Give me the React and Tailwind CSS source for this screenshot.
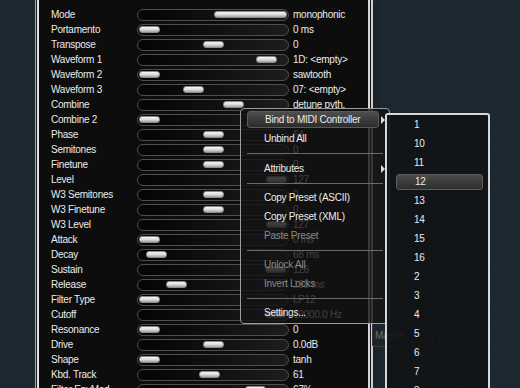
import clsx from 'clsx';

const rows = [
    { label: 'Mode', thumb: 76, wide: true, value: 'monophonic' },
    { label: 'Portamento', thumb: 1, value: '0 ms' },
    { label: 'Transpose', thumb: 65, value: '0' },
    { label: 'Waveform 1', thumb: 118, value: '1D: <empty>' },
    { label: 'Waveform 2', thumb: 1, value: 'sawtooth' },
    { label: 'Waveform 3', thumb: 45, value: '07: <empty>' },
    { label: 'Combine', thumb: 85, value: 'detune pyth.' },
    { label: 'Combine 2', thumb: 1, value: '0' },
    { label: 'Phase', thumb: 65, value: '64' },
    { label: 'Semitones', thumb: 65, value: '0' },
    { label: 'Finetune', thumb: 65, value: '0' },
    { label: 'Level', thumb: 128, value: '127' },
    { label: 'W3 Semitones', thumb: 65, value: '0' },
    { label: 'W3 Finetune', thumb: 65, value: '0' },
    { label: 'W3 Level', thumb: 128, value: '127' },
    { label: 'Attack', thumb: 1, value: '0 ms' },
    { label: 'Decay', thumb: 8, value: '68 ms' },
    { label: 'Sustain', thumb: 127, value: '126' },
    { label: 'Release', thumb: 28, value: '198 ms' },
    { label: 'Filter Type', thumb: 1, value: 'LP12' },
    { label: 'Cutoff', thumb: 127, value: '10000.0 Hz' },
    { label: 'Resonance', thumb: 1, value: '0' },
    { label: 'Drive', thumb: 65, value: '0.0dB' },
    { label: 'Shape', thumb: 1, value: 'tanh' },
    { label: 'Kbd. Track', thumb: 61, value: '61' },
    { label: 'Filter EnvMod', thumb: 107, value: '67%' },
];

const menu = [
    { text: 'Bind to MIDI Controller', active: true, arrow: true },
    { text: 'Unbind All' },
    { sep: 11 },
    { text: 'Attributes', arrow: true },
    { sep: 10 },
    { text: 'Copy Preset (ASCII)' },
    { text: 'Copy Preset (XML)' },
    { text: 'Paste Preset', disabled: true },
    { sep: 10 },
    { text: 'Unlock All', disabled: true },
    { text: 'Invert Locks', disabled: true },
    { sep: 10 },
    { text: 'Settings...' },
];

const controllers = ['1', '10', '11', '12', '13', '14', '15', '16', '2', '3', '4', '5', '6', '7', '8'];

const Slider = ({ thumb, wide }) => (
    <div className="w-[152px] h-[12px] shrink-0 rounded-[6px] border border-[#4e4e4e] bg-gradient-to-r from-[#050505] to-[#1d1d1d] flex items-center">
        <div
            className={clsx(
                'h-[7px] rounded-[3px] border border-[#8a8a8a] bg-gradient-to-b from-[#f6f6f6] via-[#dcdcdc] to-[#a4a4a4]',
                wide ? 'w-[73px]' : 'w-[21px]'
            )}
            style={{ marginLeft: thumb }}
        />
    </div>
);

const Arrow = () => (
    <div className="w-0 h-0 border-y-[4px] border-y-transparent border-l-[4px] border-l-[#dcdcdc]" />
);

export default function App() {
    return (
        <div className="relative w-[520px] h-[388px] overflow-hidden flex bg-[#1d2830] bg-[repeating-linear-gradient(135deg,#1e2a32_0px,#1e2a32_2px,#1b262e_2px,#1b262e_4px)] font-['Liberation_Sans',Arial,sans-serif] text-[10px] tracking-[-0.25px] text-[#ebebeb]">
            <div className="w-[35px] shrink-0" />
            <div className="w-px bg-[#a8a8a8]" />
            <div className="w-px bg-[#1a1a1a]" />
            <div className="w-[2px] bg-[#e2e2e2]" />

            {/* parameter panel */}
            <div className="w-[329px] shrink-0 bg-[#0d0d0d] pt-[7px] flex flex-col">
                {rows.map((row) => (
                    <div key={row.label} className="h-[15px] shrink-0 flex items-center pl-[12px]">
                        <div className="w-[86px] shrink-0 leading-none">{row.label}</div>
                        <Slider thumb={row.thumb} wide={row.wide} />
                        <div className="ml-[4px] whitespace-nowrap leading-none">{row.value}</div>
                    </div>
                ))}
            </div>

            <div className="w-[2px] bg-[#e2e2e2]" />
            <div className="w-px bg-[#1a1a1a]" />
            <div className="w-[2px] bg-[#cfcfcf] shadow-[2px_0_8px_rgba(0,0,0,0.6)]" />

            {/* background widget, behind the menus */}
            <div className="absolute left-[372px] top-[323px] w-[61px] h-[24px] border border-[#3c3c3c] rounded-[2px] flex items-end pb-[3px] pl-[2px] text-[#6c6c6c]">
                Master
            </div>

            {/* context menu */}
            <div className="absolute left-[240px] top-[108px] w-[150px] border border-[#9c9c9c] rounded-[4px] bg-[#131313]/80 pt-px pb-px flex flex-col">
                {menu.map((m, i) =>
                    m.sep ? (
                        <div key={i} className="flex items-center px-[6px]" style={{ height: m.sep }}>
                            <div className="flex-1 h-px bg-[#6a6a6a]" />
                        </div>
                    ) : (
                        <div key={i} className="h-[19px] flex items-center pl-[6px] pr-[4px]">
                            <div
                                className={clsx(
                                    'flex-1 h-[17px] flex items-center pl-[17px] rounded-[3px] whitespace-nowrap',
                                    m.active && 'bg-gradient-to-b from-[#4e4e4e] to-[#2c2c2c] border border-[#5a5a5a]',
                                    m.disabled ? 'text-[#8a8a8a]' : 'text-[#ececec]'
                                )}
                            >
                                {m.text}
                            </div>
                            <div className="w-[4px] ml-[2px]">{m.arrow && <Arrow />}</div>
                        </div>
                    )
                )}
            </div>

            {/* controller submenu */}
            <div className="absolute left-[385px] top-[113px] w-[105px] h-[290px] border-2 border-b-0 border-[#d8d8d8] rounded-t-[3px] bg-[#111315]/90 flex flex-col">
                {controllers.map((c) => (
                    <div key={c} className="h-[19px] shrink-0 flex items-center pl-[9px] pr-[5px]">
                        <div
                            className={clsx(
                                'flex-1 h-[16px] flex items-center pl-[18px] rounded-[3px]',
                                c === '12' && 'bg-gradient-to-b from-[#4a4a4a] to-[#2e2e2e] border border-[#5c5c5c] pl-[17px]'
                            )}
                        >
                            {c}
                        </div>
                    </div>
                ))}
            </div>
        </div>
    );
}
